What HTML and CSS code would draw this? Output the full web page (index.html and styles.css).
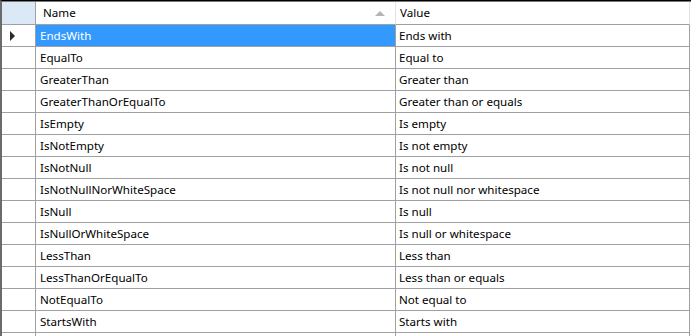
FILE: index.html
```html
<!DOCTYPE html>
<html>
<head>
<meta charset="utf-8">
<link rel="stylesheet" href="styles.css">
</head>
<body>
<div class="grid">
  <div class="row head">
    <div class="cell rh corner"></div>
    <div class="cell hc name">Name<span class="sort"></span></div>
    <div class="cell hc value">Value</div>
  </div>
  <div class="row">
    <div class="cell rh"><span class="cur"></span></div>
    <div class="cell sel">EndsWith</div>
    <div class="cell val">Ends with</div>
  </div>
  <div class="row"><div class="cell rh"></div><div class="cell">EqualTo</div><div class="cell val">Equal to</div></div>
  <div class="row"><div class="cell rh"></div><div class="cell">GreaterThan</div><div class="cell val">Greater than</div></div>
  <div class="row"><div class="cell rh"></div><div class="cell">GreaterThanOrEqualTo</div><div class="cell val">Greater than or equals</div></div>
  <div class="row"><div class="cell rh"></div><div class="cell">IsEmpty</div><div class="cell val">Is empty</div></div>
  <div class="row"><div class="cell rh"></div><div class="cell">IsNotEmpty</div><div class="cell val">Is not empty</div></div>
  <div class="row"><div class="cell rh"></div><div class="cell">IsNotNull</div><div class="cell val">Is not null</div></div>
  <div class="row"><div class="cell rh"></div><div class="cell">IsNotNullNorWhiteSpace</div><div class="cell val">Is not null nor whitespace</div></div>
  <div class="row"><div class="cell rh"></div><div class="cell">IsNull</div><div class="cell val">Is null</div></div>
  <div class="row"><div class="cell rh"></div><div class="cell">IsNullOrWhiteSpace</div><div class="cell val">Is null or whitespace</div></div>
  <div class="row"><div class="cell rh"></div><div class="cell">LessThan</div><div class="cell val">Less than</div></div>
  <div class="row"><div class="cell rh"></div><div class="cell">LessThanOrEqualTo</div><div class="cell val">Less than or equals</div></div>
  <div class="row"><div class="cell rh"></div><div class="cell">NotEqualTo</div><div class="cell val">Not equal to</div></div>
  <div class="row"><div class="cell rh"></div><div class="cell">StartsWith</div><div class="cell val">Starts with</div></div>
  <div class="row"><div class="cell rh"></div><div class="cell"></div><div class="cell"></div></div>
</div>
</body>
</html>
```
FILE: styles.css
```css
html, body {
  margin: 0;
  padding: 0;
  background: #ffffff;
  overflow: hidden;
}
.grid {
  width: 691px;
  height: 336px;
  box-sizing: border-box;
  border-top: 1px solid #000000;
  border-left: 2px solid #6b6b6b;
  box-shadow: inset 0 1px 0 #7a7a7a;
  font-family: "Noto Sans", "Open Sans", sans-serif;
  font-size: 11.6px;
  color: #000000;
  overflow: hidden;
  padding-top: 1px;
}
.row {
  display: grid;
  grid-template-columns: 34px 360px 294px;
  height: 22px;
}
.row.head {
  height: 23px;
}
.cell {
  box-sizing: border-box;
  border-right: 1px solid #a0a0a0;
  border-bottom: 1px solid #a0a0a0;
  display: flex;
  align-items: center;
  padding-left: 4px;
  padding-bottom: 1px;
  white-space: nowrap;
  overflow: hidden;
}
.cell.val {
  padding-left: 3px;
}
.cell.rh {
  padding-left: 0;
  padding-bottom: 0;
  justify-content: flex-start;
}
.corner {
  background: #dbe8f6;
}
.hc {
  padding-left: 7px;
  position: relative;
}
.hc.value {
  padding-left: 4px;
}
.head .cell {
  border-right-color: #e3e3e3;
  border-bottom-color: #a0a0a0;
}
.head .corner {
  border-right-color: #a0a0a0;
}
.sort {
  position: absolute;
  right: 10px;
  top: 9px;
  width: 0;
  height: 0;
  border-left: 5px solid transparent;
  border-right: 5px solid transparent;
  border-bottom: 5px solid #b4b4b4;
}
.cur {
  display: block;
  width: 0;
  height: 0;
  margin-left: 8px;
  border-top: 5px solid transparent;
  border-bottom: 5px solid transparent;
  border-left: 5px solid #2b2b2b;
}
.sel {
  background: #3399ff;
  color: #ffffff;
}
```
